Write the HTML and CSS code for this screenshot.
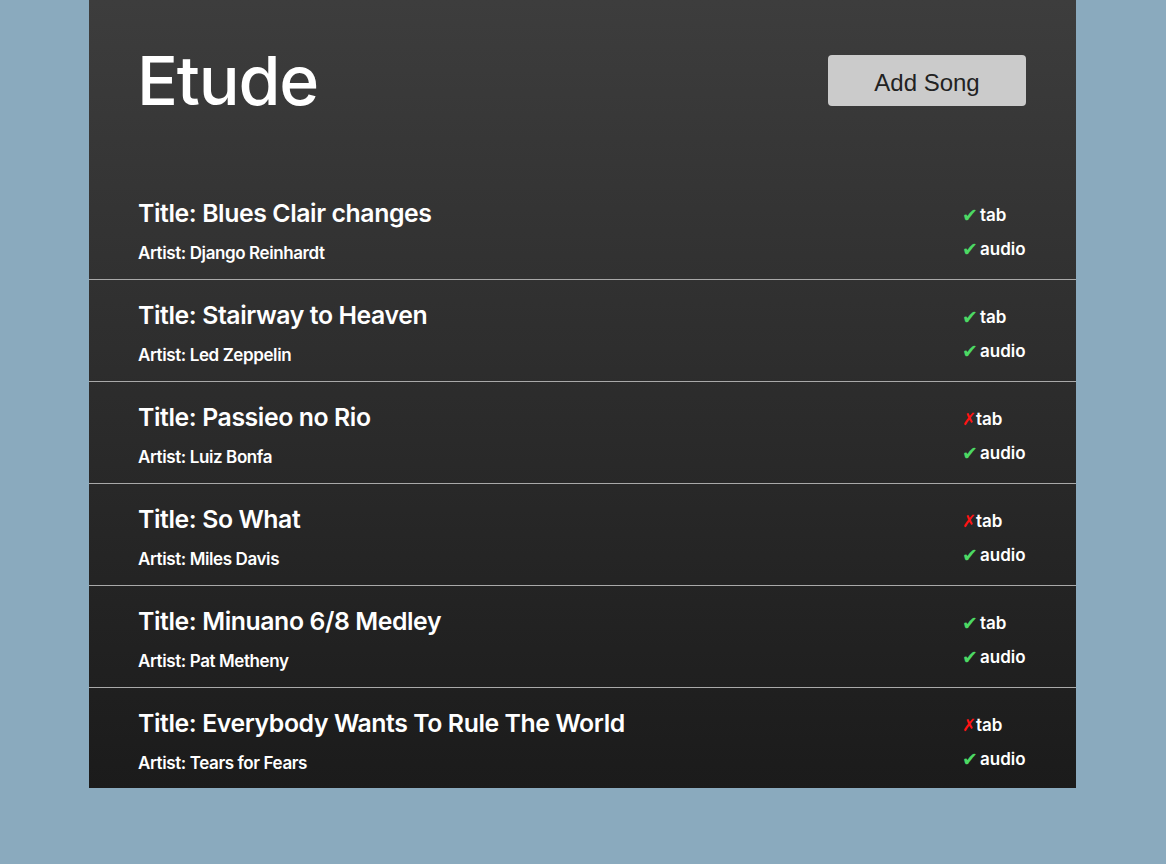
FILE: index.html
```html
<!DOCTYPE html>
<html>
<head>
<meta charset="utf-8">
<title>Etude</title>
<link rel="stylesheet" href="styles.css">
</head>
<body>
<div class="app">
  <header class="header">
    <h1 class="brand">Etude</h1>
    <button class="add-btn">Add Song</button>
  </header>
  <ul class="songs">
    <li class="song">
      <div class="info"><div class="title">Title: Blues Clair changes</div><div class="artist">Artist: Django Reinhardt</div></div>
      <div class="flags"><div class="flag"><span class="yes">✔</span>tab</div><div class="flag"><span class="yes">✔</span>audio</div></div>
    </li>
    <li class="song">
      <div class="info"><div class="title">Title: Stairway to Heaven</div><div class="artist">Artist: Led Zeppelin</div></div>
      <div class="flags"><div class="flag"><span class="yes">✔</span>tab</div><div class="flag"><span class="yes">✔</span>audio</div></div>
    </li>
    <li class="song">
      <div class="info"><div class="title">Title: Passieo no Rio</div><div class="artist">Artist: Luiz Bonfa</div></div>
      <div class="flags"><div class="flag"><span class="no">✗</span>tab</div><div class="flag"><span class="yes">✔</span>audio</div></div>
    </li>
    <li class="song">
      <div class="info"><div class="title">Title: So What</div><div class="artist">Artist: Miles Davis</div></div>
      <div class="flags"><div class="flag"><span class="no">✗</span>tab</div><div class="flag"><span class="yes">✔</span>audio</div></div>
    </li>
    <li class="song">
      <div class="info"><div class="title">Title: Minuano 6/8 Medley</div><div class="artist">Artist: Pat Metheny</div></div>
      <div class="flags"><div class="flag"><span class="yes">✔</span>tab</div><div class="flag"><span class="yes">✔</span>audio</div></div>
    </li>
    <li class="song">
      <div class="info"><div class="title">Title: Everybody Wants To Rule The World</div><div class="artist">Artist: Tears for Fears</div></div>
      <div class="flags"><div class="flag"><span class="no">✗</span>tab</div><div class="flag"><span class="yes">✔</span>audio</div></div>
    </li>
  </ul>
</div>
</body>
</html>
```
FILE: styles.css
```css
* { box-sizing: border-box; }
html, body { margin: 0; padding: 0; }
body {
  background: #8aaabe;
  font-family: "Inter", "Noto Sans", sans-serif;
  color: #fff;
  height: 864px;
  padding-left: 89px;
}
.app {
  width: 987px;
  background: linear-gradient(to bottom, #3d3d3d 0%, #1b1b1b 100%);
}
.header {
  height: 178px;
  padding: 0 50px 18px 48px;
  display: flex;
  justify-content: space-between;
  align-items: center;
}
.brand {
  margin: 0;
  font-size: 68px;
  font-weight: 500;
  letter-spacing: -1.2px;
  line-height: 1;
}
.add-btn {
  width: 198px;
  height: 51px;
  border: none;
  border-radius: 4px;
  background: #cbcbcb;
  color: #222;
  font-family: "Liberation Sans", Arial, sans-serif;
  font-size: 24px;
  padding: 5px 0 0;
}
.songs { list-style: none; margin: 0; padding: 0; }
.song {
  display: flex;
  justify-content: space-between;
  align-items: flex-start;
  height: 102px;
  padding: 20px 50px 0 49px;
  border-bottom: 1px solid #a9a9a9;
}
.song:last-child { border-bottom: none; height: 100px; }
.title {
  font-size: 24.8px;
  font-weight: 600;
  line-height: 30px;
  letter-spacing: -0.4px;
}
.artist {
  margin-top: 15px;
  font-size: 17px;
  font-weight: 600;
  line-height: 20px;
  letter-spacing: -0.4px;
}
.flags { padding-top: 7px; width: 64px; }
.flag {
  font-size: 17px;
  font-weight: 600;
  line-height: 20px;
  display: flex;
  align-items: center;
}
.flag + .flag { margin-top: 14px; }
.yes { color: #4cd964; width: 18px; font-size: 19px; font-family: "DejaVu Sans", sans-serif; font-weight: 700; }
.no { color: #ff1414; width: 14px; font-size: 17px; font-family: "DejaVu Sans", sans-serif; font-weight: 700; }
```
